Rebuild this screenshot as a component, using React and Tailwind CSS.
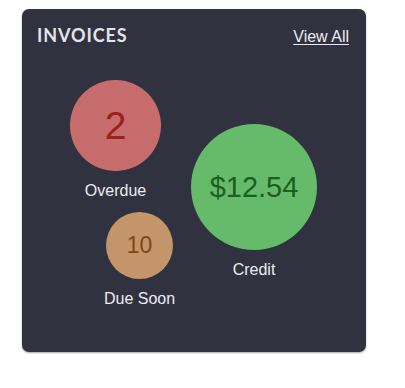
import React from "react";

function Bubble({ left, top, size, bg, color, fontSize, value, label }) {
  return (
    <div
      className="absolute flex flex-col items-center"
      style={{ left, top, width: size }}
    >
      <div
        className="flex shrink-0 items-center justify-center rounded-full"
        style={{ width: size, height: size, background: bg }}
      >
        <span
          className="font-['Liberation_Sans',Arial,sans-serif] leading-none"
          style={{ color, fontSize }}
        >
          {value}
        </span>
      </div>
      <div className="mt-[8px] whitespace-nowrap font-['Liberation_Sans',Arial,sans-serif] text-[16px] leading-6 text-[#ececf2]">
        {label}
      </div>
    </div>
  );
}

export default function App() {
  return (
    <div className="min-h-[388px] w-[405px] bg-white pl-[22px] pt-[9px]">
      <div className="relative h-[343px] w-[344px] rounded-[7px] bg-[#31323f] shadow-[0_1px_2px_rgba(0,0,0,0.35)]">
        <div className="flex items-baseline justify-between pl-[15px] pr-[17px] pt-[14px]">
          <h2 className="font-['Lato',sans-serif] text-[18px] font-bold leading-6 tracking-[0.9px] text-[#e4e4ea]">
            INVOICES
          </h2>
          <a
            href="#"
            className="font-['Liberation_Sans',Arial,sans-serif] text-[16px] leading-6 text-[#ececf2] underline underline-offset-2"
          >
            View All
          </a>
        </div>
        <Bubble
          left={48}
          top={71}
          size={91}
          bg="#c66c6c"
          color="#9b2020"
          fontSize={39}
          value="2"
          label="Overdue"
        />
        <Bubble
          left={169}
          top={115}
          size={126}
          bg="#66bb6a"
          color="#1b5e20"
          fontSize={29}
          value="$12.54"
          label="Credit"
        />
        <Bubble
          left={84}
          top={203}
          size={67}
          bg="#c4956a"
          color="#834514"
          fontSize={23}
          value="10"
          label="Due Soon"
        />
      </div>
    </div>
  );
}
